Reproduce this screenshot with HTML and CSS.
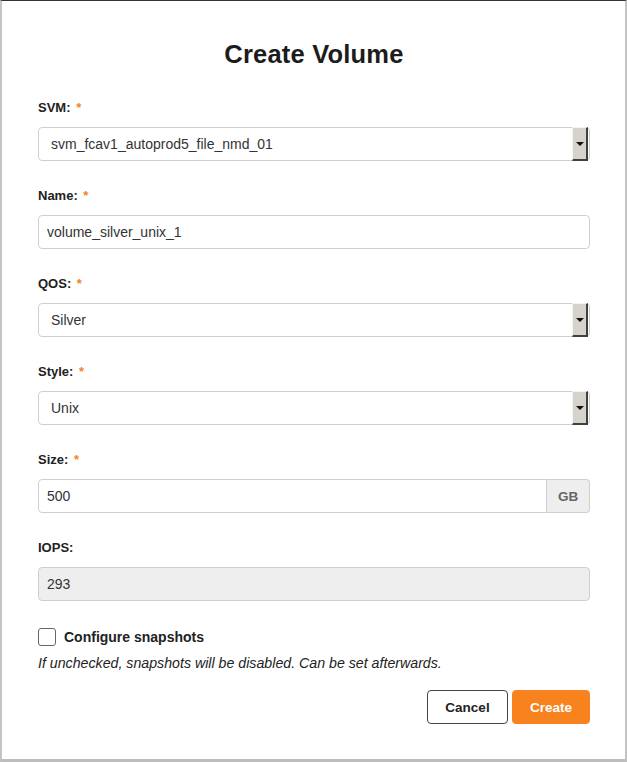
FILE: index.html
```html
<!DOCTYPE html>
<html>
<head>
<meta charset="utf-8">
<link rel="stylesheet" href="styles.css">
</head>
<body>
<div class="dialog">
  <h1 class="title">Create Volume</h1>
  <div class="form">
    <div class="group">
      <div class="label">SVM: <span class="req">*</span></div>
      <div class="control select"><span class="value">svm_fcav1_autoprod5_file_nmd_01</span><span class="arrow"><span class="tri"></span></span></div>
    </div>
    <div class="group">
      <div class="label">Name: <span class="req">*</span></div>
      <div class="control input"><span class="value">volume_silver_unix_1</span></div>
    </div>
    <div class="group">
      <div class="label">QOS: <span class="req">*</span></div>
      <div class="control select"><span class="value">Silver</span><span class="arrow"><span class="tri"></span></span></div>
    </div>
    <div class="group">
      <div class="label">Style: <span class="req">*</span></div>
      <div class="control select"><span class="value">Unix</span><span class="arrow"><span class="tri"></span></span></div>
    </div>
    <div class="group">
      <div class="label">Size: <span class="req">*</span></div>
      <div class="input-group">
        <div class="control input joined"><span class="value">500</span></div>
        <span class="addon">GB</span>
      </div>
    </div>
    <div class="group">
      <div class="label">IOPS:</div>
      <div class="control input disabled"><span class="value">293</span></div>
    </div>
  </div>
  <div class="check-row">
    <span class="checkbox"></span>
    <span class="check-label">Configure snapshots</span>
  </div>
  <p class="help">If unchecked, snapshots will be disabled. Can be set afterwards.</p>
  <div class="actions">
    <button class="btn btn-cancel">Cancel</button>
    <button class="btn btn-create">Create</button>
  </div>
</div>
</body>
</html>
```
FILE: styles.css
```css
html, body {
  margin: 0;
  padding: 0;
  background: #fff;
}
body {
  font-family: "Liberation Sans", Arial, sans-serif;
  color: #222;
}
.dialog {
  position: relative;
  box-sizing: border-box;
  width: 627px;
  height: 762px;
  border-top: 1px solid #333;
  border-left: 2px solid #c4c4c4;
  border-right: 2px solid #c4c4c4;
  border-bottom: 3px solid #bdbdbd;
  padding: 0 35px 0 36px;
  overflow: hidden;
}
.dialog::before {
  content: "";
  position: absolute;
  left: -2px;
  top: 0;
  width: 2px;
  height: 55px;
  background: #2b2b2b;
}
.title {
  margin: 0;
  padding-top: 37px;
  font-size: 25.5px;
  line-height: 32px;
  font-weight: bold;
  text-align: center;
  color: #1c1c1c;
  letter-spacing: 0.2px;
}
.form {
  margin-top: 30px;
}
.group {
  margin-bottom: 27px;
}
.label {
  font-size: 13px;
  line-height: 16px;
  font-weight: bold;
  color: #222;
  margin-bottom: 11px;
}
.req {
  color: #f5821f;
  margin-left: 2px;
}
.control {
  box-sizing: border-box;
  height: 34px;
  border: 1px solid #cfcfcf;
  border-radius: 4px;
  display: flex;
  align-items: center;
  font-size: 14px;
  color: #333;
  background: #fff;
}
.select .value {
  flex: 1;
  padding-left: 12px;
}
.input .value {
  flex: 1;
  padding-left: 8px;
}
.arrow {
  box-sizing: border-box;
  width: 16px;
  height: 34px;
  margin: -1px 1px -1px 0;
  background: #d6d3cd;
  border-top: 1px solid #f4f4f4;
  border-left: 1px solid #f4f4f4;
  border-right: 2px solid #404040;
  border-bottom: 2px solid #404040;
  display: flex;
  align-items: center;
  justify-content: center;
}
.tri {
  width: 0;
  height: 0;
  border-left: 4px solid transparent;
  border-right: 4px solid transparent;
  border-top: 4px solid #111;
}
.input-group {
  display: flex;
}
.joined {
  flex: 1;
  border-radius: 4px 0 0 4px;
}
.addon {
  box-sizing: border-box;
  width: 43px;
  height: 34px;
  border: 1px solid #cfcfcf;
  border-left: none;
  border-radius: 0 4px 4px 0;
  background: #eee;
  color: #666;
  font-size: 13.5px;
  font-weight: bold;
  display: flex;
  align-items: center;
  justify-content: center;
}
.disabled {
  background: #eee;
}
.check-row {
  display: flex;
  align-items: center;
  height: 18px;
}
.checkbox {
  box-sizing: border-box;
  width: 18px;
  height: 18px;
  border: 1px solid #666;
  border-radius: 3px;
  background: #fff;
}
.check-label {
  margin-left: 8px;
  font-size: 14px;
  font-weight: bold;
  color: #222;
}
.help {
  margin: 9px 0 0;
  font-size: 14.2px;
  line-height: 16px;
  font-style: italic;
  color: #222;
}
.actions {
  margin-top: 19px;
  display: flex;
  justify-content: flex-end;
  gap: 4px;
}
.btn {
  box-sizing: border-box;
  height: 34px;
  border-radius: 4px;
  font-family: "Liberation Sans", Arial, sans-serif;
  font-size: 13.5px;
  font-weight: bold;
  padding: 0;
}
.btn-cancel {
  width: 81px;
  background: #fff;
  border: 1px solid #444;
  color: #222;
}
.btn-create {
  width: 78px;
  background: #f7821e;
  border: 1px solid #f7821e;
  color: #fff;
}
```
